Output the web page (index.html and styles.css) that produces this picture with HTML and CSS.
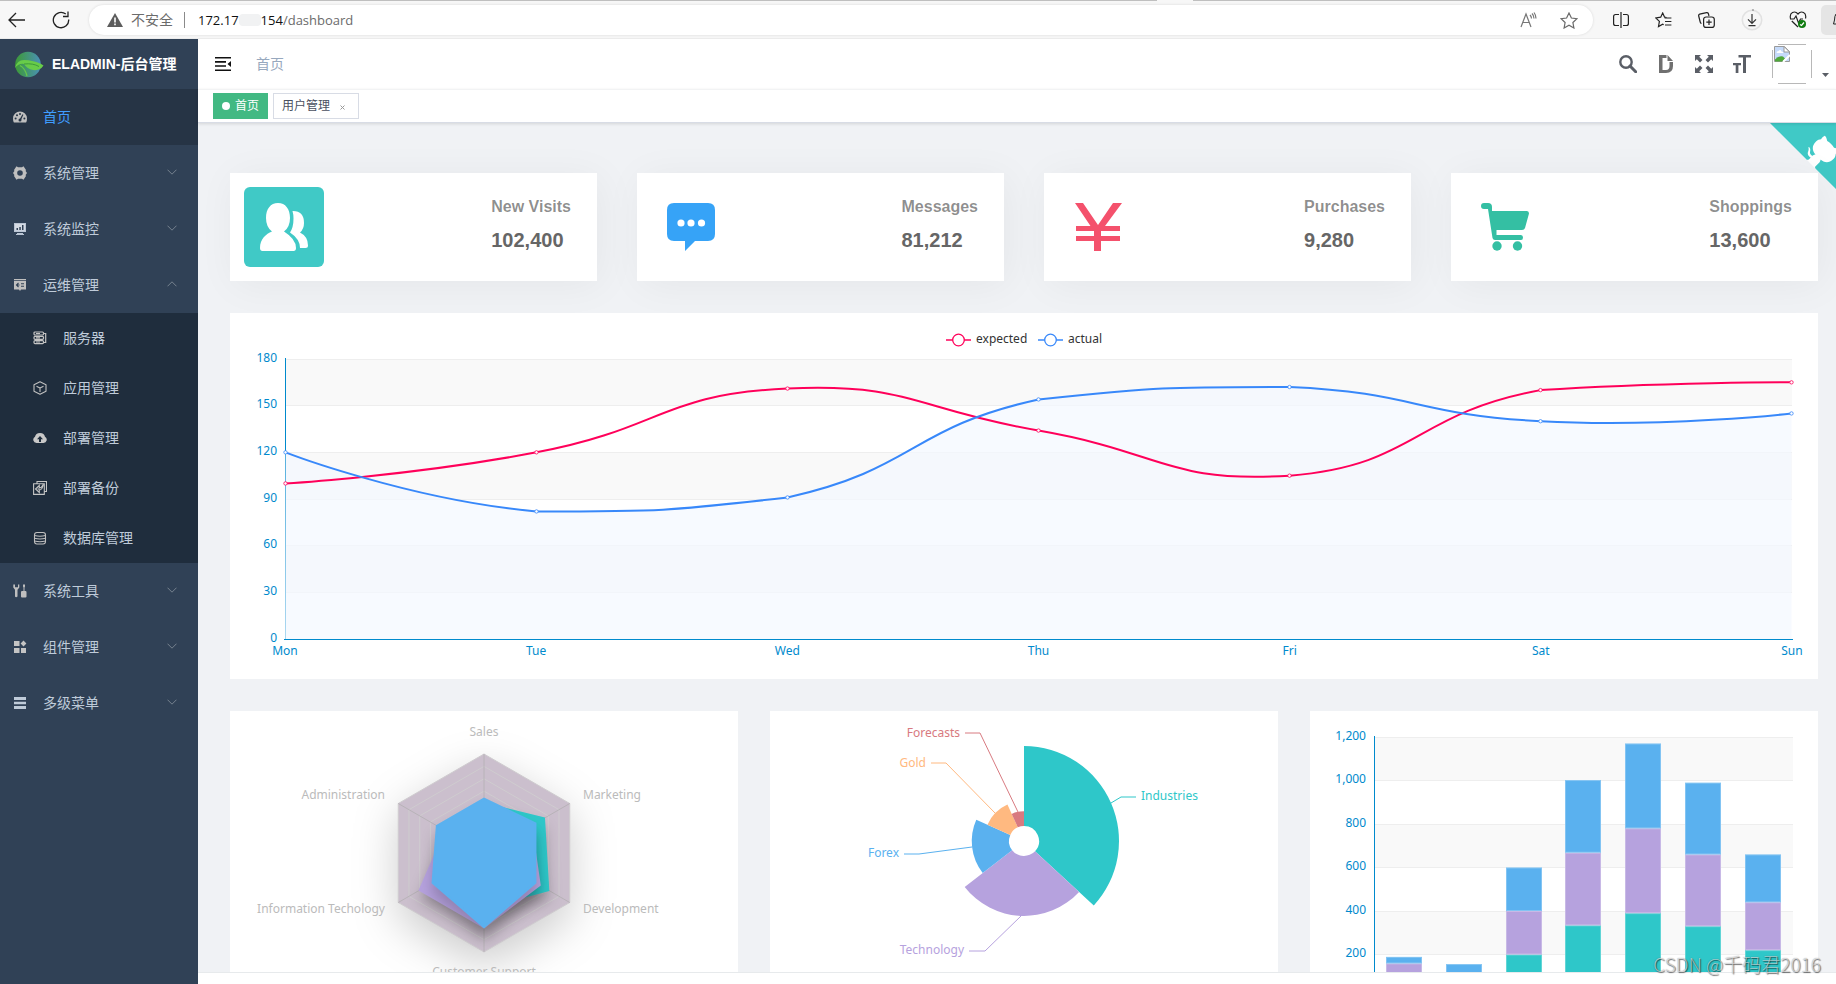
FILE: index.html
```html
<!DOCTYPE html>
<html lang="zh-CN">
<head>
<meta charset="utf-8">
<title>ELADMIN-后台管理</title>
<link rel="stylesheet" href="styles.css">
</head>
<body>
<header class="browser">
  <button class="bbtn back" aria-label="Back"><svg width="18" height="16" viewBox="0 0 18 16"><path d="M8 1 1 8l7 7M1 8h16" fill="none" stroke="#222" stroke-width="1.3"/></svg></button>
  <button class="bbtn reload" aria-label="Reload"><svg width="18" height="18" viewBox="0 0 18 18"><path d="M16.7 8.500A7.700 7.700 0 1 1 13.800 3M16 .5V5.500H11" fill="none" stroke="#222" stroke-width="1.3"/></svg></button>
  <div class="address">
    <svg width="16" height="14" viewBox="0 0 16 14"><path d="M8 0 16 14H0Z" fill="#5c5c5c" stroke-linejoin="round"/><path d="M7.200 4.500h1.600v5H7.200zM7.200 10.600h1.600v1.600H7.200z" fill="#fff"/></svg>
    <span class="insecure">不安全</span>
    <span class="bar"></span>
    <div class="url"><b>172.17</b><i class="smudge"></i><b>154</b>/dashboard</div>
    <button class="bbtn read" aria-label="Read aloud"><svg width="17" height="16" viewBox="0 0 17 16" fill="none" stroke="#777" stroke-width="1.2"><path d="M1 15 6 2l5 13M3 10.500h6M10 3q1.500 1.500 1.500 3.500M12 1.500q2 2 2 5M14 .5q2 2.500 2 6"/></svg></button>
    <button class="bbtn fav" aria-label="Favorite"><svg width="18" height="17" viewBox="0 0 18 17"><path d="m9 1 2.400 5 5.500.7-4 3.800 1 5.500L9 13.300 4.100 16l1-5.500-4-3.800 5.500-.7Z" fill="none" stroke="#6a6a6a" stroke-width="1.200"/></svg></button>
  </div>
  <div class="tools">
    <button class="bbtn" aria-label="Split screen"><svg width="16" height="16" viewBox="0 0 16 16" fill="none" stroke="#222" stroke-width="1.200"><path d="M6 2.500H2.500Q.6 2.500.6 4.500v7q0 2 1.900 2H6M10 2.500h3.500q1.900 0 1.900 2v7q0 2-1.900 2H10M8 0v16"/></svg></button>
    <button class="bbtn" aria-label="Favorites"><svg width="17" height="16" viewBox="0 0 17 16" fill="none" stroke="#222" stroke-width="1.200"><path d="M11.500 5.500 9.600 5.200 7.700 1 5.700 5.200.8 6l3.600 3.400-.9 5.100 4.200-2.300 1 .5M9.600 6h6.800M10 9.500h6.400M10 13h6.400"/></svg></button>
    <button class="bbtn" aria-label="Collections"><svg width="17" height="16" viewBox="0 0 17 16" fill="none" stroke="#222" stroke-width="1.200"><path d="M3.500 11.500Q2.500 11.300 2.200 10L.7 4q-.3-1.500 1-1.900L8.500.7q1.500-.2 1.900 1L11 4"/><rect x="5.600" y="5" width="10.700" height="10.400" rx="2.500"/><path d="M11 7.500v5.500M8.300 10.200h5.400"/></svg></button>
    <button class="bbtn" aria-label="Downloads"><svg width="22" height="22" viewBox="0 0 22 22" fill="none"><circle cx="11" cy="11" r="9.700" stroke="#e2e2e2" stroke-width="1.600"/><path d="M11 5v9M7 10.300l4 4 4-4M7.500 16.700h7M12 .5v1" stroke="#333" stroke-width="1.200"/></svg></button>
    <button class="bbtn" aria-label="Browser essentials"><svg width="18" height="18" viewBox="0 0 18 18" fill="none" stroke="#222" stroke-width="1.200"><path d="M1.500 7.500Q.5 3 3.500 1.500T9 3q2.500-3 5.500-1.500t2 6M2.800 10 9 16M1 8h4l2-3 2.500 7L11.500 8h2.500"/><circle cx="13" cy="13" r="4" fill="#107c10" stroke="none"/><path d="m11 13.500 1.500 1 2.500-3" stroke="#fff"/></svg></button>
  </div>
  <button class="alerts" aria-label="Notifications"><svg width="3" height="14" viewBox="0 0 3 14"><path d="M3 1Q1.500 3 1.500 7L.5 11H3" fill="none" stroke="#222"/></svg></button>
</header>

<div class="app">
  <aside class="sidebar">
    <a class="brand" href="#">
      <svg width="29" height="27" viewBox="0 0 29 27"><defs><linearGradient id="g" x1="0" x2="1"><stop offset="0" stop-color="#3d9a35"/><stop offset="1" stop-color="#4a90b8"/></linearGradient></defs><circle cx="13" cy="13.500" r="12.800" fill="url(#g)"/><path d="M0 17Q2 9 9 9 14 9 17 10 24 11 28.500 14.500 25 20 18 19 12 18 9 13 4 12 0 17Z" fill="#68cc49"/><path d="M9 13q9-1 15 2.500" fill="none" stroke="#3c9b3a"/><path d="M5 14.500Q10 17 12 25" fill="none" stroke="#66c84a" stroke-width="1.300"/></svg>
      <span>ELADMIN-后台管理</span>
    </a>
    <nav>
      <a class="item active" href="#"><svg class="ico" viewBox="0 0 14 14"><path d="M7 1.500a7 7 0 0 1 7 7q0 2.500-.9 4H.9Q0 11 0 8.500a7 7 0 0 1 7-7Z" fill="#bfbfbf"/><g fill="#263445"><circle cx="2.600" cy="8.500" r="1"/><circle cx="4" cy="5.300" r="1"/><circle cx="7" cy="4" r="1"/><circle cx="11.400" cy="8.500" r="1"/><circle cx="7" cy="10" r="1.500"/><path d="m6.500 9.500 3-5.300.9.500-2.400 5.300z"/></g></svg><span>首页</span></a>
      <button class="item"><svg class="ico" viewBox="0 0 14 14"><path fill-rule="evenodd" d="M3.500.3 5 1.200h4L10.500.3 13 4l-.4 1 1.400 2-1.400 2 .4 1-2.500 3.700L9 12.800H5l-1.500.9L1 10l.4-1L0 7l1.400-2L1 4ZM7 4.200a2.800 2.800 0 1 0 0 5.600 2.800 2.800 0 0 0 0-5.600Z" fill="#bfbfbf"/></svg><span>系统管理</span><svg class="chev" viewBox="0 0 10 6"><path d="m.5.700 4.500 4.500L9.500.700"/></svg></button>
      <button class="item"><svg class="ico" viewBox="0 0 14 14"><path d="M1 1h12v9H1zM4 11h6v1H4zM3 12h8v1H3z" fill="#b9c4d3"/><path d="M2 2h10v6.500H2z" fill="#d5dbe4"/><path d="M3.500 6h1.500v2H3.500zM6.300 5h1.500v3H6.300zM9 3h1.500v5H9z" fill="#304156"/></svg><span>系统监控</span><svg class="chev" viewBox="0 0 10 6"><path d="m.5.700 4.500 4.500L9.500.700"/></svg></button>
      <button class="item"><svg class="ico" viewBox="0 0 14 14"><path d="M1 1h12v1.200H1zM1 3h12v8.500H8L7 13l-1-1.500H1z" fill="#bfbfbf"/><path d="M5.500 5 3.500 7l2 2M4 7h2.500M8 5.700h3M8 8.300h3" fill="none" stroke="#304156" stroke-width="1.100"/></svg><span>运维管理</span><svg class="chev" viewBox="0 0 10 6"><path d="M.5 5.300 5 .8l4.500 4.500"/></svg></button>
      <div class="sub">
        <a class="item" href="#"><svg class="ico" viewBox="0 0 14 14" fill="none" stroke="#c4c4c4" stroke-width="1.200"><rect x="1" y="1" width="9.500" height="3" rx="1"/><rect x="1" y="5.300" width="9.500" height="3" rx="1"/><rect x="1" y="9.600" width="9.500" height="3" rx="1"/><path d="M10.500 2.500h2.200v9h-2.200M3 2.500h4M3 6.800h4M3 11h4"/></svg><span>服务器</span></a>
        <a class="item" href="#"><svg class="ico" viewBox="0 0 14 14" fill="none" stroke="#bfbfbf" stroke-width="1.100" stroke-linejoin="round"><path d="M7 .7 13 3.800v6.400L7 13.300 1 10.200V3.800ZM3.500 5.200 7 7l3.500-1.800M7 7v4"/></svg><span>应用管理</span></a>
        <a class="item" href="#"><svg class="ico" viewBox="0 0 14 14"><path d="M3.500 12A3.300 3.300 0 0 1 2 5.800 5 4.500 0 0 1 7 2a5 4.500 0 0 1 5 3.800 3.300 3.300 0 0 1-1.500 6.200Z" fill="#c8c8c8"/><path d="M7 5 4 8.300h2V11h2V8.300h2Z" fill="#1f2d3d"/></svg><span>部署管理</span></a>
        <a class="item" href="#"><svg class="ico" viewBox="0 0 14 14" fill="none" stroke="#c4c4c4" stroke-width="1.100"><path d="M4 2.500v-2h9.500v10h-2M.6 2.700h10.700v10.700H.6zM6.300 4.500 2.500 8l3.800 3.500V9q3 0 4-5.500Q8.500 7 6.300 6.800ZM4.500 8h2"/></svg><span>部署备份</span></a>
        <a class="item" href="#"><svg class="ico" viewBox="0 0 14 14" fill="none" stroke="#bfbfbf" stroke-width="1.100"><rect x="1.500" y="1.500" width="11" height="11.500" rx="2.500"/><path d="M1.500 4.500Q7 6 12.500 4.500M1.500 7.300Q7 8.800 12.500 7.300M1.500 10Q7 11.500 12.500 10"/></svg><span>数据库管理</span></a>
      </div>
      <button class="item"><svg class="ico" viewBox="0 0 14 14" fill="#bfbfbf"><path d="M.3.500v3L2 5.800v6.700q1 1.300 2.500 0V5.800L6.300 3.500V.5H5v2.700H2V.5ZM10 .5h2v2l-.5 1v3.500h1q1 0 1 1.300v4.200q0 1-1 1H9q-1 0-1-1V8.300Q8 7 9 7h1.500V3.500L10 2.500Z"/></svg><span>系统工具</span><svg class="chev" viewBox="0 0 10 6"><path d="m.5.700 4.500 4.500L9.500.700"/></svg></button>
      <button class="item"><svg class="ico" viewBox="0 0 14 14" fill="#c4c4c4"><path d="M1 1h5.500v5H1zM1 8h5.500v5H1zM8 8h5v5H8zM10.500.600l2.900 2.900-2.900 2.900-2.900-2.900z"/></svg><span>组件管理</span><svg class="chev" viewBox="0 0 10 6"><path d="m.5.700 4.500 4.500L9.500.700"/></svg></button>
      <button class="item"><svg class="ico" viewBox="0 0 14 14" fill="#bfcbd9"><path d="M1 1h12v3H1zM1 5.700h12v2.600H1zM1 10h12v3H1z"/></svg><span>多级菜单</span><svg class="chev" viewBox="0 0 10 6"><path d="m.5.700 4.500 4.500L9.500.700"/></svg></button>
    </nav>
  </aside>

  <div class="page">
    <div class="navbar">
      <button class="nbtn" aria-label="Toggle menu"><svg width="16" height="14" viewBox="0 0 16 14"><path d="M0 0h16v1.600H0zM0 4.100h11v1.600H0zM0 8.200h11v1.600H0zM0 12.400h16V14H0zM16 4v6l-3.500-3z" fill="#111"/></svg></button>
      <span class="crumb">首页</span>
      <div class="right">
        <button class="nbtn" aria-label="Search"><svg width="18" height="18" viewBox="0 0 18 18" fill="none" stroke="#5a5e66"><circle cx="7" cy="7" r="5.700" stroke-width="2.400"/><path d="m11 11 5.700 5.700" stroke-width="3" stroke-linecap="round"/></svg></button>
        <button class="nbtn" aria-label="Docs"><svg width="18" height="18" viewBox="0 0 18 18"><path fill-rule="evenodd" d="M2 0h8.500L16 6v5q0 7-7 7H2ZM5.500 3v12H9q3.500 0 3.500-4V6.500H10V3Z" fill="#707070"/><path d="M10 0v6.500h6" fill="none" stroke="#fff"/></svg></button>
        <button class="nbtn" aria-label="Fullscreen"><svg width="18" height="18" viewBox="0 0 18 18" fill="#5a5e66"><path id="arw" d="M0 0h6L4.200 1.800 7.500 5 5 7.500 1.800 4.200 0 6Z"/><use href="#arw" transform="matrix(-1 0 0 1 18 0)"/><use href="#arw" transform="matrix(1 0 0 -1 0 18)"/><use href="#arw" transform="matrix(-1 0 0 -1 18 18)"/></svg></button>
        <button class="nbtn" aria-label="Font size"><svg width="18" height="18" viewBox="0 0 18 18" fill="#5a5e66"><path d="M5.500 0H18v2.500h-5V18h-3V2.500H5.500ZM0 8h8v2.300H5.400V18H2.700v-7.700H0Z"/></svg></button>
        <svg class="avatar" width="40" height="40" viewBox="0 0 40 40"><path d="M6 .5h28M6 39.500h28M.5 6v28M39.500 6v28" stroke="#b8b8b8"/><path d="M2.500 2.500h10l5 5v10h-15z" fill="#c5dafa" stroke="#9a9a9a"/><path d="M12 2.500V8h5.500z" fill="#fff" stroke="#9a9a9a"/><path d="M4.500 9q0-2 2-2 2-2 3 .5 2 0 1.500 1.500z" fill="#fff"/><path d="M3 17.500v-2q5-4.500 8-3l2 2-2.500 3z" fill="#4fa83a"/><path d="m11 18 7-7" stroke="#fff" stroke-width="2"/></svg>
        <svg class="caret" width="7" height="4" viewBox="0 0 7 4"><path d="M0 0h7L3.500 4z" fill="#5a5e66"/></svg>
      </div>
    </div>
    <div class="tags">
      <a class="tag on" href="#"><i></i>首页</a>
      <span class="tag">用户管理<button class="close" aria-label="关闭"><svg width="5" height="5" viewBox="0 0 5 5"><path d="m.5.500 4 4m0-4-4 4" stroke="#999"/></svg></button></span>
    </div>
    <main class="main">
      <a class="corner" href="#" aria-label="GitHub"><svg width="80" height="80" viewBox="0 0 250 250"><path fill="#40c9c6" d="M0,0 L115,115 L130,115 L142,142 L250,250 L250,0 Z"/><g fill="#fff"><path d="M128.3,109.0 C113.8,99.7 119.0,89.6 119.0,89.6 C122.0,82.7 120.5,78.6 120.5,78.6 C119.2,72.0 123.4,76.3 123.4,76.3 C127.3,80.9 125.5,87.3 125.5,87.3 C122.9,97.6 130.6,101.9 134.4,103.2"/><path d="M115.0,115.0 C114.9,115.1 118.7,116.5 119.8,115.4 L133.7,101.6 C136.9,99.2 139.9,98.4 142.2,98.6 C133.8,88.0 127.5,74.4 143.8,58.0 C148.5,53.4 154.0,51.2 159.7,51.0 C160.3,49.4 163.2,43.6 171.4,40.1 C171.4,40.1 176.1,42.5 178.8,56.2 C183.1,58.6 187.2,61.8 190.9,65.4 C194.5,69.0 197.7,73.2 200.1,77.6 C213.8,80.2 216.3,84.9 216.3,84.9 C212.7,93.1 206.9,96.0 205.4,96.6 C205.1,102.4 203.0,107.8 198.3,112.5 C181.9,128.9 168.3,122.5 157.7,114.1 C157.9,116.9 156.7,120.9 152.7,124.9 L141.0,136.5 C139.8,137.7 141.6,141.9 141.8,141.8 Z"/></g></svg></a>
      <section class="stats">
        <div class="stat"><div class="pic filled"><svg viewBox="0 0 48 48" fill="#fff"><path d="M18 0C10.500 0 6 6 6 15q0 9 6 13.500C6 31 0 36 0 45q0 3 2.500 3h31q2.500 0 2.500-3 0-9-12-16.500Q30 24 30 15 30 6 18 0Z" visibility="hidden"/><path d="M18 0C10.500 0 6 6 6 15q0 9 6 13.500C6 31 0 36 0 45q0 3 2.500 3h31q2.500 0 2.500-3 0-9-12-16.500Q30 24 30 15C30 6 25.500 0 18 0Z"/><path d="M33 8q11 0 11 12 0 6-4 9.500 8 4 8 13 0 2.500-2.500 2.500H40q0-9-10-15.500 3.500-5 3.500-14 0-4-1-7.500Z"/></svg></div><dl><dt>New Visits</dt><dd>102,400</dd></dl></div>
        <div class="stat"><div class="pic"><svg viewBox="0 0 48 48"><path d="M7 0h34q7 0 7 7v24q0 7-7 7H28L18 48V38H7q-7 0-7-7V7q0-7 7-7Z" fill="#36a3f7"/><g fill="#fff"><circle cx="14" cy="20" r="3.600"/><circle cx="24" cy="20" r="3.600"/><circle cx="34.500" cy="20" r="3.600"/></g></svg></div><dl><dt>Messages</dt><dd>81,212</dd></dl></div>
        <div class="stat"><div class="pic"><svg viewBox="0 0 48 48" fill="#f4516c"><path d="M1 0h8l15 22L39 0h9L31 23h15v5H27v5h19v5H27v10h-7V38H2v-5h18v-5H2v-5h14.500Z"/></svg></div><dl><dt>Purchases</dt><dd>9,280</dd></dl></div>
        <div class="stat"><div class="pic"><svg viewBox="0 0 48 48" fill="#34bfa3"><path d="M3 0h4q4 0 4 4v4h35q2 0 2 2.500L44 25q-.6 2-3 2H15.500v5H40q2 0 2 2.500T40 37H14q-2 0-2.500-2L7 6H3Q0 6 0 3t3-3Z"/><circle cx="16" cy="43" r="4.700"/><circle cx="36.500" cy="43" r="4.700"/></svg></div><dl><dt>Shoppings</dt><dd>13,600</dd></dl></div>
      </section>
      <section class="panel"><svg class="chart" id="line" viewBox="0 0 1588 366" role="img" aria-label="expected / actual"></svg></section>
      <section class="trio">
        <div class="panel"><svg class="chart" id="radar" viewBox="0 0 508 332"></svg></div>
        <div class="panel"><svg class="chart" id="pie" viewBox="0 0 508 332"></svg></div>
        <div class="panel"><svg class="chart" id="bar" viewBox="0 0 508 332"></svg></div>
      </section>
    </main>
    <footer class="foot"></footer>
    <div class="watermark">CSDN @千码君2016</div>
  </div>
</div>
<script src="charts.js"></script>
</body>
</html>
```
FILE: styles.css
```css
* { box-sizing: border-box; }
body {
  margin: 0;
  height: 100vh;
  display: flex;
  flex-direction: column;
  overflow: hidden;
  font: 14px/1.2 "Liberation Sans", "Noto Sans CJK SC", sans-serif;
  color: #303133;
}
button { border: 0; padding: 0; background: none; font: inherit; color: inherit; text-align: left; }
a { text-decoration: none; color: inherit; }
svg { flex: none; display: block; }

.browser {
  flex: none;
  height: 39px;
  display: flex;
  align-items: center;
  padding: 2px 0 0 8px;
  border-bottom: 1px solid #ebebeb;
  background: linear-gradient(90deg, #bfbfbf 63%, #f7f7f7 63%, #f7f7f7 65%, #bfbfbf 65%) 0 0 / 100% 1px no-repeat #f7f7f7;
}
.reload { margin-left: 26px; }
.address {
  flex: 1;
  height: 30px;
  margin: 0 18px 0 19px;
  padding: 0 15px 0 18px;
  display: flex;
  align-items: center;
  border-radius: 15px;
  background: #fff;
  box-shadow: 0 0 3px rgba(0, 0, 0, .12);
}
.insecure { margin-left: 8px; color: #6b6b6b; }
.bar { width: 1px; height: 16px; margin: 0 13px 0 11px; background: #8a8a8a; }
.url { flex: 1; display: flex; align-items: center; font: 13px/20px "Open Sans", sans-serif; color: #6b6b6b; }
.url b { font-weight: 400; color: #111; }
.smudge { width: 22px; height: 12px; border-radius: 4px; background: #f1f2f3; }
.fav { margin-left: 23px; }
.tools { display: flex; align-items: center; gap: 26px; margin-left: 2px; }
.alerts { display: flex; align-items: center; justify-content: flex-end; width: 15px; height: 30px; margin-left: 14px; border-radius: 5px 0 0 5px; background: #e5e5e5; }

.app { flex: 1; min-height: 0; display: flex; }
.sidebar { flex: none; width: 198px; background: #304156; color: #bfcbd9; }
.brand { height: 50px; display: flex; align-items: center; gap: 8px; padding-left: 15px; color: #fff; font-weight: 700; }
.item { width: 100%; height: 56px; display: flex; align-items: center; padding: 0 21px 0 13px; }
.ico { width: 14px; height: 14px; margin-right: 16px; }
.chev { width: 10px; height: 6px; margin: 0 0 2px auto; fill: none; stroke: #76828f; }
.active { background: #263445; color: #409eff; }
.sub { background: #1f2d3d; }
.sub .item { height: 50px; padding-left: 33px; }

.page { flex: 1; min-width: 0; display: flex; flex-direction: column; position: relative; }
.navbar { flex: none; height: 50px; display: flex; align-items: center; padding: 0 7px 0 17px; background: #fff; }
.crumb { margin-left: 25px; color: #97a8be; }
.right { margin-left: auto; display: flex; align-items: center; gap: 20px; }
.avatar { margin-left: 1px; }
.caret { margin: 22px 0 0 -10px; }
.tags { flex: none; height: 34px; display: flex; gap: 5px; padding: 3px 15px 0; background: #fff; border-top: 1px solid #f2f3f4; border-bottom: 1px solid #d8dce5; box-shadow: 0 1px 3px rgba(0, 0, 0, .12); z-index: 1; }
.tag { height: 26px; display: flex; align-items: center; padding: 0 8px; border: 1px solid #d8dce5; font-size: 12px; color: #495060; }
.tag i { width: 8px; height: 8px; margin-right: 5px; border-radius: 50%; background: #fff; }
.tag.on { background: #42b983; border-color: #42b983; color: #fff; }
.close { margin: 2px 5px 0 10px; }

.main { flex: 1; min-height: 0; overflow: hidden; position: relative; padding: 50px 18px 0 32px; background: #f0f2f5; }
.corner { position: absolute; top: 0; right: -14px; }
.stats { position: relative; display: grid; grid-template-columns: repeat(4, 1fr); gap: 40px; margin-bottom: 32px; }
.stat { display: flex; justify-content: space-between; padding: 14px 26px 14px 14px; background: #fff; box-shadow: 4px 4px 40px rgba(0, 0, 0, .05); }
.pic { width: 80px; height: 80px; padding: 16px; border-radius: 6px; }
.filled { background: #40c9c6; }
dl { margin: 11px 0 0; font-weight: 700; line-height: 18px; }
dt { margin-bottom: 14px; font-size: 16px; color: rgba(0, 0, 0, .45); }
dd { margin: 0; font-size: 20px; line-height: 20px; color: #666; }
.panel { position: relative; background: #fff; }
.trio { display: grid; grid-template-columns: repeat(3, 1fr); gap: 32px; margin-top: 32px; }
.chart { width: 100%; height: auto; font: 12px "Noto Sans", sans-serif; }
.foot { flex: none; height: 12px; background: #fff; border-top: 1px solid #e7eaec; }
.watermark { position: absolute; right: 15px; bottom: 8px; z-index: 2; font: 300 19px/24px "Noto Sans CJK SC", sans-serif; color: rgba(255, 255, 255, .6); text-shadow: 1px 1px 1px rgba(0, 0, 0, .55), 0 0 1px rgba(0, 0, 0, .4); }
```
FILE: charts.js
```js
const NS = 'http://www.w3.org/2000/svg';
const TEAL = '#2ec7c9', PURPLE = '#b6a2de', BLUE = '#5ab1ef', AXIS = '#008acd';

function add(parent, name, attrs, text) {
  const el = document.createElementNS(NS, name);
  for (const key in attrs) el.setAttribute(key, attrs[key]);
  if (text !== undefined) el.textContent = text;
  parent.appendChild(el);
  return el;
}
function label(svg, x, y, text, fill, anchor) {
  add(svg, 'text', { x, y: y + 4, fill, 'text-anchor': anchor || 'start' }, text);
}
function grid(svg, x0, x1, y0, y1, labels) {
  const n = labels.length - 1, step = (y1 - y0) / n;
  for (let i = 0; i < n; i += 2) add(svg, 'rect', { x: x0, y: y0 + i * step, width: x1 - x0, height: step, fill: '#f9f9f9' });
  labels.forEach((t, i) => {
    const y = Math.floor(y0 + i * step) + 0.5;
    if (i < n) add(svg, 'path', { d: `M${x0} ${y}H${x1}`, stroke: '#eee' });
    if (t) label(svg, x0 - 8, y - 2, t, AXIS, 'end');
  });
  add(svg, 'path', { d: `M${x0 + 0.5} ${y0 - 1}V${y1}`, stroke: AXIS });
}

// Line chart
function smooth(p) {
  const lo = [0, 1].map(k => Math.min(...p.map(q => q[k])));
  const hi = [0, 1].map(k => Math.max(...p.map(q => q[k])));
  const clamp = c => c.map((v, k) => Math.min(hi[k], Math.max(lo[k], v)));
  let d = `M${p[0]}`, c0 = p[0];
  for (let i = 1; i < p.length; i++) {
    let c1 = p[i], after = p[i];
    if (i < p.length - 1) {
      const v = [p[i + 1][0] - p[i - 1][0], p[i + 1][1] - p[i - 1][1]];
      const a = Math.hypot(p[i][0] - p[i - 1][0], p[i][1] - p[i - 1][1]);
      const b = Math.hypot(p[i][0] - p[i + 1][0], p[i][1] - p[i + 1][1]);
      const r = b / (a + b);
      c1 = [0, 1].map(k => p[i][k] - v[k] * 0.5 * (1 - r));
      after = [0, 1].map(k => p[i][k] + v[k] * 0.5 * r);
    }
    d += `C${clamp(c0)} ${clamp(c1)} ${p[i]}`;
    c0 = after;
  }
  return d;
}
const line = document.getElementById('line');
grid(line, 55, 1562, 46, 326, ['180', '150', '120', '90', '60', '30', '0']);
add(line, 'path', { d: 'M54 326.5H1563', stroke: AXIS });
['Mon', 'Tue', 'Wed', 'Thu', 'Fri', 'Sat', 'Sun'].forEach((t, i) => label(line, 55 + i * 1507 / 6, 338, t, AXIS, 'middle'));
const toPoints = v => v.map((n, i) => [55.5 + i * 1506 / 6, 326 - n * 280 / 180]);
const expected = toPoints([100, 120, 161, 134, 105, 160, 165]);
const actual = toPoints([120, 82, 91, 154, 162, 140, 145]);
add(line, 'path', { d: smooth(actual) + 'V326H55Z', fill: '#f3f8ff', 'fill-opacity': 0.7 });
[[expected, '#ff005a'], [actual, '#3888fa']].forEach(([pts, color]) => {
  add(line, 'path', { d: smooth(pts), fill: 'none', stroke: color, 'stroke-width': 2 });
  pts.forEach(([cx, cy]) => add(line, 'circle', { cx, cy, r: 1.7, fill: '#fff', stroke: color, 'stroke-width': 0.8 }));
});
[[716, 'expected', '#ff005a'], [808, 'actual', '#3888fa']].forEach(([x, t, stroke]) => {
  add(line, 'path', { d: `M${x} 27h25`, stroke, 'stroke-width': 1.5 });
  add(line, 'circle', { cx: x + 12.5, cy: 27, r: 5.8, fill: '#fff', stroke, 'stroke-width': 1.3 });
  label(line, x + 30, 26, t, '#333');
});

// Radar chart
const radar = document.getElementById('radar');
const RX = 254, RY = 142, RR = 99;
const hex = f => [0, 1, 2, 3, 4, 5].map(i => {
  const a = i * Math.PI / 3, r = RR * (Array.isArray(f) ? f[i] : f);
  return [RX - r * Math.sin(a), RY - r * Math.cos(a)];
});
const defs = add(radar, 'defs', {});
[['far', 15, 22.5, 0.2], ['near', 10, 7, 0.2]].forEach(([id, dy, sd, o]) => {
  const f = add(defs, 'filter', { id, x: '-60%', y: '-60%', width: '220%', height: '220%', 'color-interpolation-filters': 'sRGB' });
  add(f, 'feDropShadow', { dx: 0, dy, stdDeviation: sd, 'flood-color': '#000', 'flood-opacity': o });
});
add(radar, 'polygon', { points: hex(1).join(' '), fill: '#cbbfcd', filter: 'url(#far)' });
for (let i = 1; i <= 8; i++) add(radar, 'polygon', { points: hex(i / 8).join(' '), fill: 'none', stroke: '#cfcccf' });
hex(1).forEach(p => add(radar, 'path', { d: `M${RX} ${RY}L${p}`, stroke: '#b8b3b8' }));
[[[.5, .35, .6, .55, .75, .7], TEAL], [[.4, .45, .75, .75, .65, .55], PURPLE], [[.55, .55, .6, .75, .6, .6], BLUE]].forEach(([f, fill]) => {
  add(radar, 'polygon', { points: hex(f).join(' '), fill, stroke: fill, 'stroke-width': 2, filter: 'url(#near)' });
});
[[254, 21, 'Sales', 'middle'], [155, 84, 'Administration', 'end'], [155, 198, 'Information Techology', 'end'],
 [254, 261, 'Customer Support', 'middle'], [353, 198, 'Development', 'start'], [353, 84, 'Marketing', 'start']]
  .forEach(([x, y, t, a]) => label(radar, x, y, t, '#bbb', a));

// Rose chart
const pie = document.getElementById('pie');
const slices = [
  [320, TEAL, 'Industries', 'M341 92 351 86H366', 371, 85, 'start'],
  [240, PURPLE, 'Technology', 'M251 205 215 240H199', 194, 239, 'end'],
  [149, BLUE, 'Forex', 'M202 136 149 143H134', 129, 142, 'end'],
  [100, '#ffb980', 'Gold', 'M225 102 176 52H161', 156, 52, 'end'],
  [59, '#d87a80', 'Forecasts', 'M248 101 210 22H195', 190, 22, 'end']
];
const total = slices.reduce((s, e) => s + e[0], 0);
let turn = 0;
slices.forEach(([v, color, name, lead, tx, ty, anchor]) => {
  const next = turn + v / total * 2 * Math.PI, R = 15 + v / 320 * 80;
  const at = (r, a) => `${254 + r * Math.sin(a)} ${130 - r * Math.cos(a)}`;
  add(pie, 'path', { d: `M${at(15, turn)}L${at(R, turn)}A${R} ${R} 0 0 1 ${at(R, next)}L${at(15, next)}A15 15 0 0 0 ${at(15, turn)}Z`, fill: color });
  add(pie, 'path', { d: lead, fill: 'none', stroke: color });
  label(pie, tx, ty, name, color, anchor);
  turn = next;
});

// Stacked bar chart
const bar = document.getElementById('bar');
grid(bar, 64, 483, 26, 287, ['1,200', '1,000', '800', '600', '400', '200', '']);
const rest = [200, 334, 390, 330, 220];
const stacks = [[79, 80, 30], [52, 52, 52], ...rest.map(v => [v, v, v])];
stacks.forEach((stack, i) => {
  let y = 287;
  stack.forEach((v, k) => {
    const h = v * 261 / 1200;
    y -= h;
    add(bar, 'rect', { x: Math.round(76 + i * 59.8), y, width: 36, height: h, fill: [TEAL, PURPLE, BLUE][k] });
    add(bar, 'rect', { x: Math.round(76 + i * 59.8) + 0.5, y: y + 0.5, width: 35, height: h - 1, fill: 'none', stroke: '#fff', 'stroke-opacity': 0.25 });
  });
});
```
